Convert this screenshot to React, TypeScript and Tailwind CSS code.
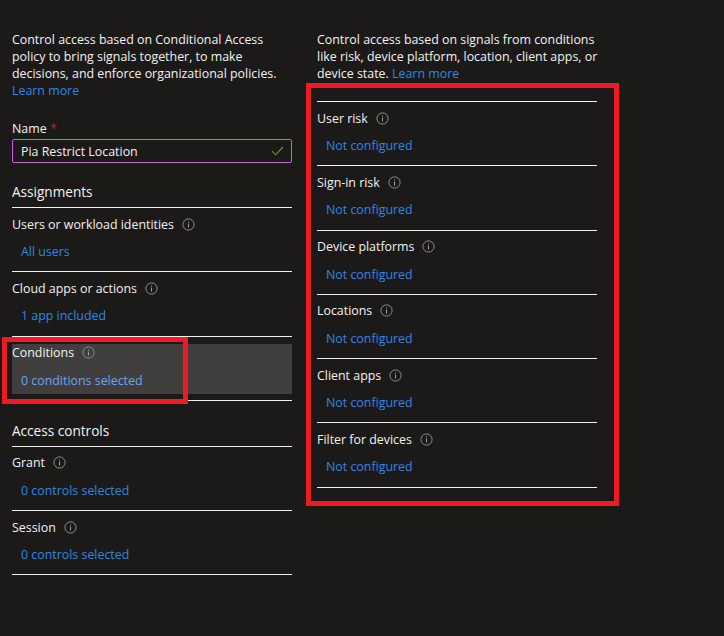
import React from "react";

function Info() {
  return (
    <svg width="13" height="13" viewBox="0 0 13 13" fill="none" className="shrink-0">
      <circle cx="6.5" cy="6.5" r="5.6" stroke="#8f8e8d" strokeWidth="1" />
      <rect x="6" y="5.5" width="1" height="4" fill="#a19f9d" />
      <rect x="6" y="3.4" width="1" height="1" fill="#a19f9d" />
    </svg>
  );
}

function Row({ label, value, selected }: { label: string; value: string; selected?: boolean }) {
  return (
    <div className="h-[64.3px] pt-[7px] border-b border-[#f3f2f1]">
      <div className={`h-[50px] ${selected ? "bg-[#403f3e]" : ""}`}>
        <div className="h-[18px] flex items-center gap-[8px] text-[#f3f2f1]">
          <span>{label}</span>
          <Info />
        </div>
        <div className={`mt-[10px] pl-[9px] ${selected ? "text-[#69a5f2]" : "text-[#2b88e8]"}`}>{value}</div>
      </div>
    </div>
  );
}

export default function App() {
  return (
    <div
      className="relative h-[636px] w-[724px] overflow-hidden bg-[#1b1a19] flex text-[12.4px] leading-[17px] text-[#f3f2f1]"
      style={{ fontFamily: '"Open Sans", "Noto Sans", sans-serif' }}
    >
      <div className="w-[280px] ml-[12px] pt-[31px]">
        <p>
          Control access based on Conditional Access policy to bring signals together, to make decisions, and enforce organizational policies.{" "}
          <span className="text-[#2b88e8]">Learn more</span>
        </p>
        <div className="mt-[21px] h-[17px]">
          Name <span className="text-[#d0121f]">*</span>
        </div>
        <div className="mt-[2px] h-[24px] rounded-[2px] border border-[#c75fd6] px-[8px] flex items-center justify-between">
          <span>Pia Restrict Location</span>
          <svg width="13" height="10" viewBox="0 0 13 10" fill="none" className="mr-[-1px]">
            <path d="M1 5 L4.5 8.8 L12 1" stroke="#6d9c3e" strokeWidth="1.1" />
          </svg>
        </div>
        <div className="mt-[20px] h-[25px] border-b border-[#f3f2f1] text-[13.6px]">Assignments</div>
        <Row label="Users or workload identities" value="All users" />
        <Row label="Cloud apps or actions" value="1 app included" />
        <Row label="Conditions" value="0 conditions selected" selected />
        <div className="mt-[21px] h-[25px] border-b border-[#f3f2f1] text-[13.6px]">Access controls</div>
        <Row label="Grant" value="0 controls selected" />
        <Row label="Session" value="0 controls selected" />
      </div>

      <div className="w-[280px] ml-[25px] pt-[31px]">
        <p className="w-[285px]">
          Control access based on signals from conditions like risk, device platform, location, client apps, or device state.{" "}
          <span className="text-[#2b88e8]">Learn more</span>
        </p>
        <div className="mt-[19px] border-t border-[#f3f2f1]">
          <Row label="User risk" value="Not configured" />
          <Row label="Sign-in risk" value="Not configured" />
          <Row label="Device platforms" value="Not configured" />
          <Row label="Locations" value="Not configured" />
          <Row label="Client apps" value="Not configured" />
          <Row label="Filter for devices" value="Not configured" />
        </div>
      </div>

      <div className="absolute left-[306px] top-[83px] w-[313px] h-[423px] border-[5px] border-[#ed1c24]" />
      <div className="absolute left-[2px] top-[337px] w-[186px] h-[67px] border-[5px] border-[#ed1c24]" />
    </div>
  );
}
